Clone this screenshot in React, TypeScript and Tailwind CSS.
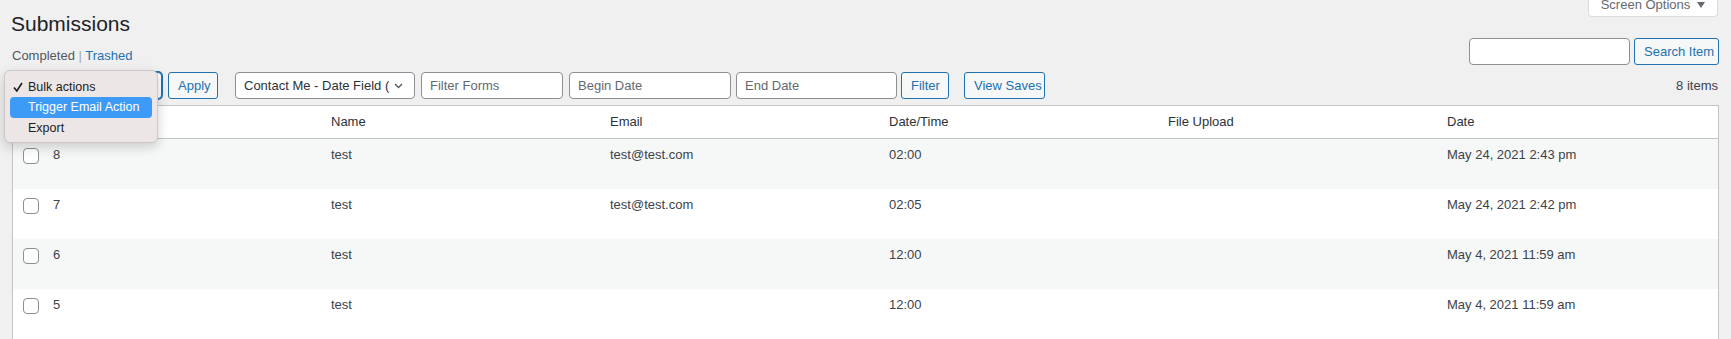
import React from "react";

const rows = [
  { id: "8", name: "test", email: "test@test.com", time: "02:00", date: "May 24, 2021 2:43 pm" },
  { id: "7", name: "test", email: "test@test.com", time: "02:05", date: "May 24, 2021 2:42 pm" },
  { id: "6", name: "test", email: "", time: "12:00", date: "May 4, 2021 11:59 am" },
  { id: "5", name: "test", email: "", time: "12:00", date: "May 4, 2021 11:59 am" },
];

const cols = "grid grid-cols-[30px_278px_279px_279px_279px_279px_1fr]";

function Checkbox() {
  return <span className="block w-[16px] h-[16px] rounded-[4px] border border-[#8c8f94] bg-white" />;
}

function OutlineButton({ children, className = "" }: { children: React.ReactNode; className?: string }) {
  return (
    <button className={`h-[27px] px-[9px] rounded-[3px] border border-[#2271b1] bg-[#f6f7f7] text-[#2271b1] text-[13px] leading-none whitespace-nowrap ${className}`}>
      {children}
    </button>
  );
}

function TextInput({ placeholder, className = "" }: { placeholder?: string; className?: string }) {
  return (
    <input
      placeholder={placeholder}
      className={`h-[27px] rounded-[4px] border border-[#8c8f94] bg-white px-[8px] text-[13px] text-[#2c3338] placeholder:text-[#646970] outline-none ${className}`}
    />
  );
}

export default function App() {
  return (
    <div className="relative h-[339px] w-full overflow-hidden bg-[#f0f0f1] px-[12px] font-['Liberation_Sans',Arial,sans-serif] text-[13px] text-[#3c434a]">
      {/* Header */}
      <div className="flex items-start justify-between">
        <h1 className="-ml-px mt-[10px] text-[21px] leading-[28px] font-normal text-[#1d2327]">Submissions</h1>
        <button className="-mt-[7px] mr-px flex h-[24px] w-[130px] items-center justify-center gap-[7px] rounded-b-[4px] border border-[#dcdcde] bg-white text-[13px] text-[#646970] whitespace-nowrap">
          Screen Options
          <svg width="8" height="6" viewBox="0 0 8 6">
            <path d="M0 0 L8 0 L4 6 Z" fill="#646970" />
          </svg>
        </button>
      </div>

      {/* Views + search */}
      <div className="flex h-[26px] items-end justify-between">
        <div className="leading-[16px] text-[#50575e]">
          Completed <span className="text-[#a7aaad]">|</span> <a className="text-[#2271b1]">Trashed</a>
        </div>
        <div className="flex h-[26px] items-center">
          <TextInput className="h-[26px] w-[161px]" />
          <OutlineButton className="ml-[4px] h-[26px] w-[85px] px-0">Search Item</OutlineButton>
        </div>
      </div>

      {/* Toolbar */}
      <div className="mt-[8px] flex h-[27px] items-center">
        <div className="h-[27px] w-[150px] rounded-[4px] border border-[#2271b1] bg-white shadow-[0_0_0_1px_#2271b1]" />
        <OutlineButton className="ml-[6px] w-[50px] px-0">Apply</OutlineButton>
        <div className="ml-[17px] flex h-[27px] w-[180px] items-center justify-between rounded-[4px] border border-[#8c8f94] bg-white pl-[8px] pr-[11px] text-[#2c3338]">
          <span className="whitespace-nowrap overflow-hidden">Contact Me - Date Field (</span>
          <svg width="9" height="6" viewBox="0 0 9 6" className="ml-[4px] shrink-0">
            <path d="M1 1 L4.5 4.5 L8 1" fill="none" stroke="#50575e" strokeWidth="1.3" />
          </svg>
        </div>
        <TextInput placeholder="Filter Forms" className="ml-[6px] w-[142px]" />
        <TextInput placeholder="Begin Date" className="ml-[6px] w-[162px]" />
        <TextInput placeholder="End Date" className="ml-[5px] w-[161px]" />
        <OutlineButton className="ml-[4px] w-[48px] px-0">Filter</OutlineButton>
        <OutlineButton className="ml-[15px] w-[81px] px-0">View Saves</OutlineButton>
        <span className="ml-auto mr-px">8 items</span>
      </div>

      {/* Table */}
      <div className="mt-[6px] border border-[#c3c4c7] bg-white">
        <div className={`${cols} h-[33px] items-center border-b border-[#c3c4c7] text-[#2c3338]`}>
          <div className="pl-[10px]">
            <Checkbox />
          </div>
          <div />
          <div className="pl-[10px]">Name</div>
          <div className="pl-[10px]">Email</div>
          <div className="pl-[10px]">Date/Time</div>
          <div className="pl-[10px]">File Upload</div>
          <div className="pl-[10px]">Date</div>
        </div>
        {rows.map((r, i) => (
          <div key={r.id} className={`${cols} h-[50px] items-start pt-[6px] leading-[20px] ${i % 2 === 0 ? "bg-[#f6f7f7]" : "bg-white"}`}>
            <div className="pl-[10px] pt-[3px]">
              <Checkbox />
            </div>
            <div className="pl-[10px]">{r.id}</div>
            <div className="pl-[10px]">{r.name}</div>
            <div className="pl-[10px]">{r.email}</div>
            <div className="pl-[10px]">{r.time}</div>
            <div className="pl-[10px]" />
            <div className="pl-[10px]">{r.date}</div>
          </div>
        ))}
      </div>

      {/* Open bulk actions menu */}
      <div className="absolute left-[4px] top-[70px] w-[154px] h-[73px] rounded-[6px] border border-[#cfc7c7] bg-[#ece6e6] px-[5px] pt-[6px] text-[12.5px] text-[#1d1d1f] shadow-[0_4px_12px_rgba(0,0,0,0.18)]">
        <div className="flex h-[20px] items-center">
          <svg width="10" height="10" viewBox="0 0 10 10" className="ml-[3px] mr-[5px]">
            <path d="M1 5.5 L3.8 9 L9 1" fill="none" stroke="#1d1d1f" strokeWidth="1.6" />
          </svg>
          Bulk actions
        </div>
        <div className="flex h-[21px] items-center rounded-[4px] bg-[#3d9bf7] pl-[18px] text-white">Trigger Email Action</div>
        <div className="flex h-[21px] items-center pl-[18px]">Export</div>
      </div>
    </div>
  );
}
